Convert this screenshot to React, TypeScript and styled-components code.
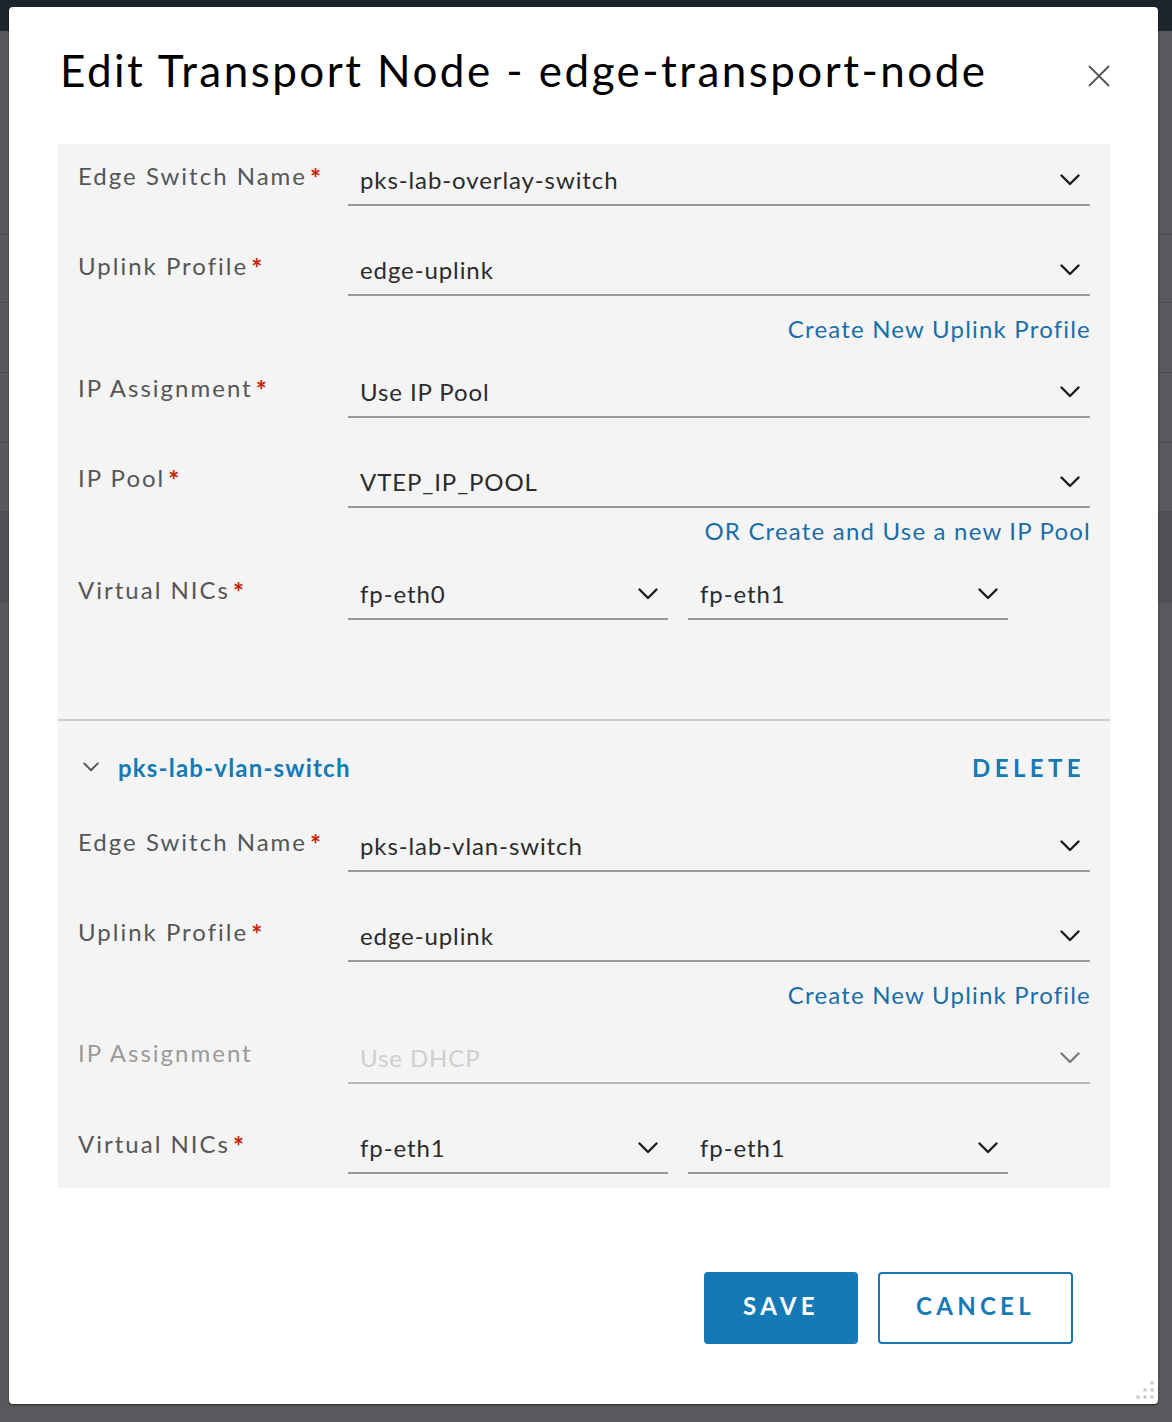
import React from "react";
import styled, { createGlobalStyle } from "styled-components";

const GlobalStyle = createGlobalStyle`
  html, body { margin: 0; padding: 0; }
  body { font-family: Lato, "Liberation Sans", sans-serif; background: #55575a; }
  * { box-sizing: border-box; }
`;

const Page = styled.div`
  position: relative;
  width: 1172px;
  height: 1422px;
  overflow: hidden;
  background: #57595c;
`;

const TopBar = styled.div`
  height: 31px;
  background: #1c252c;
`;

const BgList = styled.div`
  display: flex;
  flex-direction: column;
  padding-top: 96px;
`;

const BgRow = styled.div<{ $h: number; $dark?: boolean }>`
  height: ${(p) => p.$h}px;
  border-bottom: 1px solid #494b4e;
  background: ${(p) => (p.$dark ? "#4e5054" : "transparent")};
`;

const Modal = styled.div`
  position: absolute;
  left: 9px;
  top: 7px;
  width: 1149px;
  height: 1397px;
  background: #ffffff;
  border-radius: 4px;
  box-shadow: 0 1px 2px rgba(0, 0, 0, 0.6);
  display: flex;
  flex-direction: column;
`;

const Header = styled.div`
  display: flex;
  justify-content: space-between;
  align-items: flex-start;
  padding: 35px 48px 0 51px;
  height: 137px;
`;

const Title = styled.h1`
  margin: 0;
  font-weight: 400;
  font-size: 44px;
  line-height: 56px;
  color: #000;
  letter-spacing: 2.45px;
`;

const CloseButton = styled.button`
  border: none;
  background: none;
  padding: 0;
  margin-top: 23px;
  width: 22px;
  height: 22px;
  display: flex;
  cursor: pointer;
`;

const Panel = styled.div`
  margin: 0 48px 0 49px;
  background: #f4f4f4;
`;

const Section = styled.div<{ $pt: number; $pb: number; $divider?: boolean }>`
  padding: ${(p) => p.$pt}px 20px ${(p) => p.$pb}px 20px;
  border-top: ${(p) => (p.$divider ? "2px solid #cccccc" : "none")};
`;

const SectionHeader = styled.div`
  display: flex;
  align-items: center;
  justify-content: space-between;
  height: 30px;
  padding-right: 5px;
`;

const SectionTitle = styled.div`
  display: flex;
  align-items: center;
  gap: 19px;
  padding-left: 5px;
  font-size: 24px;
  font-weight: 700;
  color: #1579b5;
  letter-spacing: 1.2px;
`;

const DeleteButton = styled.button`
  border: none;
  background: none;
  padding: 0;
  font-family: inherit;
  font-size: 24px;
  font-weight: 700;
  letter-spacing: 4.4px;
  color: #1579b5;
`;

const Row = styled.div<{ $mt: number }>`
  display: grid;
  grid-template-columns: 270px 1fr;
  align-items: start;
  margin-top: ${(p) => p.$mt}px;
`;

const Label = styled.div<{ $disabled?: boolean }>`
  margin-top: 2px;
  font-size: 24px;
  line-height: 30px;
  letter-spacing: 2px;
  color: ${(p) => (p.$disabled ? "#9a9a9a" : "#565656")};
`;

const Required = styled.span`
  display: inline-block;
  color: #c92100;
  margin-left: 3px;
  font-size: 26px;
  font-weight: 700;
  letter-spacing: 0;
  transform: translateY(3px);
`;

const Fields = styled.div`
  display: flex;
  gap: 20px;
`;

const Select = styled.div<{ $w?: number; $disabled?: boolean }>`
  display: flex;
  align-items: center;
  justify-content: space-between;
  height: 48px;
  padding: 0 10px 4px 12px;
  border-bottom: 2px solid ${(p) => (p.$disabled ? "#b8b8b8" : "#9a9a9a")};
  width: ${(p) => (p.$w ? `${p.$w}px` : "100%")};
  font-size: 24px;
  letter-spacing: 0.9px;
  color: ${(p) => (p.$disabled ? "#cfcfcf" : "#2b2b2b")};
`;

const ChevronBox = styled.span`
  display: flex;
  margin-top: 2px;
`;

const LinkRow = styled.div<{ $mt: number }>`
  display: flex;
  justify-content: flex-end;
  margin-top: ${(p) => p.$mt}px;
  height: 30px;
  align-items: center;
`;

const Link = styled.a`
  font-size: 24px;
  letter-spacing: 1.2px;
  margin-right: -1px;
  color: #1a6ea8;
  text-decoration: none;
  cursor: pointer;
`;

const Footer = styled.div`
  display: flex;
  justify-content: flex-end;
  gap: 20px;
  margin-top: 84px;
  padding-right: 85px;
`;

const Button = styled.button<{ $primary?: boolean }>`
  height: 72px;
  padding: 0 0 5px 0;
  width: ${(p) => (p.$primary ? "154px" : "195px")};
  border-radius: 4px;
  border: 2px solid #1579b5;
  background: ${(p) => (p.$primary ? "#1579b5" : "#ffffff")};
  color: ${(p) => (p.$primary ? "#ffffff" : "#1579b5")};
  font-family: inherit;
  font-size: 24px;
  font-weight: 700;
  letter-spacing: 4.3px;
  cursor: pointer;
`;

const Grip = styled.svg`
  position: absolute;
  right: 2px;
  bottom: 3px;
`;

const Chevron = ({ color = "#1b1b1b", w = 20 }: { color?: string; w?: number }) => (
  <svg width={w} height={w / 2 + 2} viewBox="0 0 20 12" fill="none">
    <path d="M1.5 1.5 L10 10 L18.5 1.5" stroke={color} strokeWidth="2.4" strokeLinecap="round" strokeLinejoin="round" />
  </svg>
);

type FieldProps = { value: string; w?: number; disabled?: boolean };

const SelectField = ({ value, w, disabled }: FieldProps) => (
  <Select $w={w} $disabled={disabled}>
    <span>{value}</span>
    <ChevronBox>
      <Chevron color={disabled ? "#7a7a7a" : "#1b1b1b"} />
    </ChevronBox>
  </Select>
);

const FormRow = ({
  label,
  required = true,
  mt,
  children,
  disabled,
}: {
  label: string;
  required?: boolean;
  mt: number;
  children: React.ReactNode;
  disabled?: boolean;
}) => (
  <Row $mt={mt}>
    <Label $disabled={disabled}>
      {label}
      {required && <Required>*</Required>}
    </Label>
    <div>{children}</div>
  </Row>
);

export default function App() {
  return (
    <Page>
      <GlobalStyle />
      <TopBar />
      <BgList>
        <BgRow $h={108} />
        <BgRow $h={68} />
        <BgRow $h={70} />
        <BgRow $h={70} />
        <BgRow $h={69} />
        <BgRow $h={90} $dark />
      </BgList>
      <Modal>
        <Header>
          <Title>Edit Transport Node - edge-transport-node</Title>
          <CloseButton aria-label="Close">
            <svg width="22" height="22" viewBox="0 0 22 22">
              <path d="M1 1 L21 21 M21 1 L1 21" stroke="#555" strokeWidth="1.8" />
            </svg>
          </CloseButton>
        </Header>
        <Panel>
          <Section $pt={14} $pb={99}>
            <FormRow label="Edge Switch Name" mt={0}>
              <SelectField value="pks-lab-overlay-switch" />
            </FormRow>
            <FormRow label="Uplink Profile" mt={42}>
              <SelectField value="edge-uplink" />
            </FormRow>
            <LinkRow $mt={17}>
              <Link>Create New Uplink Profile</Link>
            </LinkRow>
            <FormRow label="IP Assignment" mt={27}>
              <SelectField value="Use IP Pool" />
            </FormRow>
            <FormRow label="IP Pool" mt={42}>
              <SelectField value="VTEP_IP_POOL" />
            </FormRow>
            <LinkRow $mt={7}>
              <Link>OR Create and Use a new IP Pool</Link>
            </LinkRow>
            <FormRow label="Virtual NICs" mt={27}>
              <Fields>
                <SelectField value="fp-eth0" w={320} />
                <SelectField value="fp-eth1" w={320} />
              </Fields>
            </FormRow>
          </Section>
          <Section $pt={31} $pb={14} $divider>
            <SectionHeader>
              <SectionTitle>
                <Chevron color="#555" w={16} />
                pks-lab-vlan-switch
              </SectionTitle>
              <DeleteButton>DELETE</DeleteButton>
            </SectionHeader>
            <FormRow label="Edge Switch Name" mt={42}>
              <SelectField value="pks-lab-vlan-switch" />
            </FormRow>
            <FormRow label="Uplink Profile" mt={42}>
              <SelectField value="edge-uplink" />
            </FormRow>
            <LinkRow $mt={17}>
              <Link>Create New Uplink Profile</Link>
            </LinkRow>
            <FormRow label="IP Assignment" mt={27} required={false} disabled>
              <SelectField value="Use DHCP" disabled />
            </FormRow>
            <FormRow label="Virtual NICs" mt={42}>
              <Fields>
                <SelectField value="fp-eth1" w={320} />
                <SelectField value="fp-eth1" w={320} />
              </Fields>
            </FormRow>
          </Section>
        </Panel>
        <Footer>
          <Button $primary>SAVE</Button>
          <Button>CANCEL</Button>
        </Footer>
        <Grip width="20" height="20" viewBox="0 0 20 20">
          {[
            [16, 2],
            [9, 9],
            [16, 9],
            [2, 16],
            [9, 16],
            [16, 16],
          ].map(([x, y], i) => (
            <rect key={i} x={x - 1.5} y={y - 1.5} width="3" height="3" fill="#c4c4c4" />
          ))}
        </Grip>
      </Modal>
    </Page>
  );
}
